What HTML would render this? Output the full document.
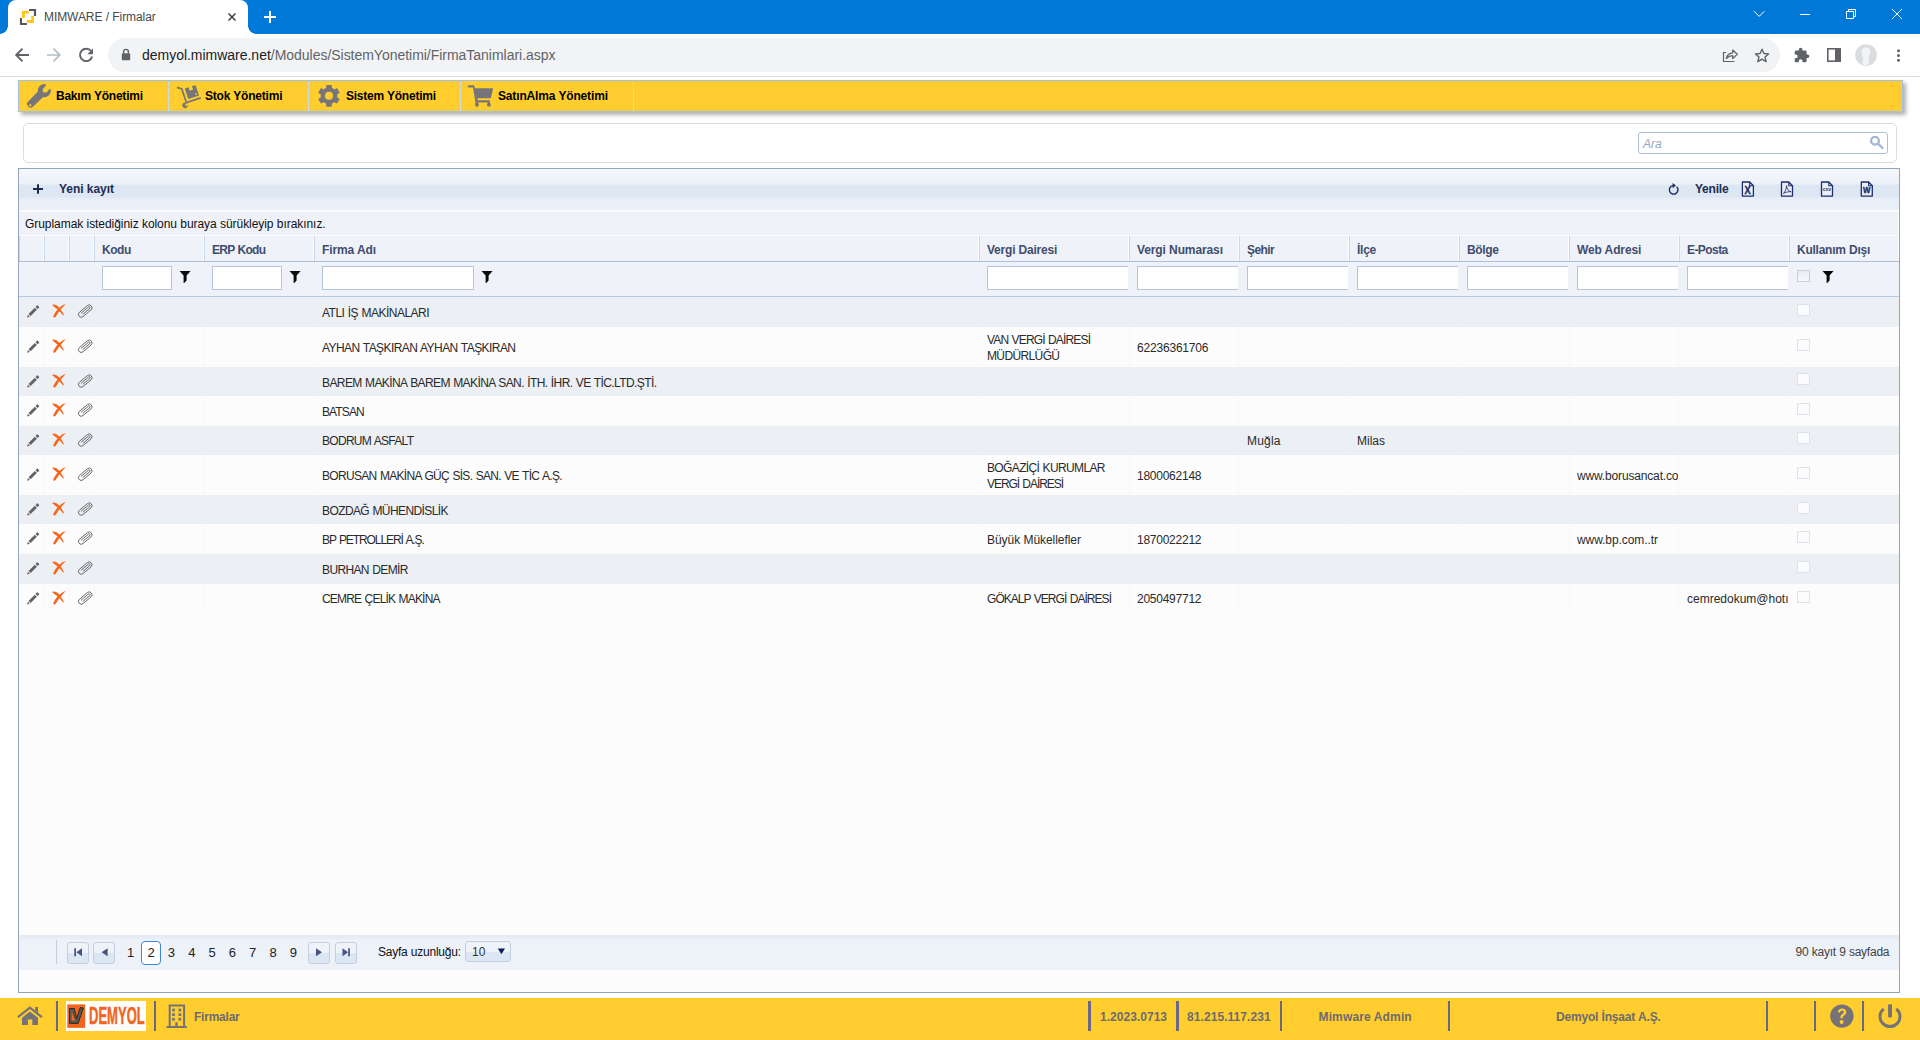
<!DOCTYPE html>
<html lang="tr">
<head>
<meta charset="utf-8">
<title>MIMWARE / Firmalar</title>
<style>
*{box-sizing:border-box;margin:0;padding:0}
html,body{width:1920px;height:1040px;overflow:hidden;background:#fff}
body{font-family:"Liberation Sans",sans-serif;font-size:12px;color:#222;position:relative}
.abs{position:absolute}
svg{display:block;position:absolute;overflow:visible}
/* ---------- browser chrome ---------- */
#tabbar{left:0;top:0;width:1920px;height:34px;background:#0078d7}
#tab{left:8px;top:0;width:240px;height:34px;background:#fff;border-radius:8px 8px 0 0}
#tab:before,#tab:after{content:"";position:absolute;bottom:0;width:8px;height:8px;background:radial-gradient(circle at 0 0,transparent 7.5px,#fff 8px)}
#tab:before{left:-8px}
#tab:after{right:-8px;transform:scaleX(-1)}
#tabtitle{left:44px;top:10px;font-size:12px;color:#45494d;white-space:nowrap;letter-spacing:-0.1px}
#toolbar{left:0;top:34px;width:1920px;height:42px;background:#fff}
#tbline{left:0;top:76px;width:1920px;height:1px;background:#dadce0}
#omni{left:108px;top:38px;width:1672px;height:34px;border-radius:17px;background:#f1f3f4}
#url{left:142px;top:47px;font-size:14px;color:#202124;white-space:nowrap}
#url .pth{color:#5f6368}#url b{font-weight:normal}
/* ---------- menu ---------- */
#menu{left:18px;top:80px;width:1885px;height:32px;background:#ffce2e;border:1px solid #a6bfe6;box-shadow:3px 3px 4px rgba(0,0,0,.3)}
.msep{top:81px;width:1px;height:30px;background:repeating-linear-gradient(#b4c5dc 0,#b4c5dc 1px,#ececec 1px,#ececec 2px)}
.mtxt{top:89px;font-weight:bold;font-size:12px;color:#000;white-space:nowrap}
/* ---------- search panel ---------- */
#spanel{left:23px;top:123px;width:1874px;height:40px;border:1px solid #dcdcdc;border-radius:5px;background:#fff}
#sbox{left:1638px;top:132px;width:250px;height:22px;border:1px solid #adbfdb;border-radius:3px;background:#fff}
#sbox i{position:absolute;left:4px;top:4px;font-size:12px;color:#95a6c1;font-style:italic}
/* ---------- grid ---------- */
#grid{left:18px;top:168px;width:1882px;height:825px;border:1px solid #95a4bd;background:#fcfcfd}
/*GRIDCSS*/
#gtool{left:19px;top:169px;width:1880px;height:41px;background:linear-gradient(#f4f7fb 0,#edf2f9 15px,#dde7f3 16px,#dde7f3 28px,#e7eef7 29px,#ebf0f8 41px)}
.gtb{font-weight:bold;font-size:12px;color:#1e2d52;white-space:nowrap}
#gpanel{left:19px;top:212px;width:1879px;height:23px;background:#eef2f8;color:#111;font-size:12px;line-height:24px;padding-left:6px;white-space:nowrap}
#ghead{left:19px;top:236px;width:1880px;height:26px;background:#eff3f9;border-bottom:1px solid #aec0d9}
.hc{top:236px;height:25px;border-left:1px solid #c9d6e8;border-right:1px solid #fbfcfe;font-weight:bold;font-size:12px;color:#414d6e;line-height:29px;padding-left:7px;white-space:nowrap;overflow:hidden}
#gfilt{left:19px;top:262px;width:1880px;height:35px;background:#eff3f9;border-bottom:1px solid #b7c7de}
.fi{top:266px;height:24px;background:#fff;border:1px solid #b4c4da}
.cb{position:absolute;width:13px;height:12px;border:1px solid #dde3ee;background:#fcfcfe;display:block}
.row{left:19px;width:1880px;overflow:hidden}
.ra{background:#eceff3}
.rb{background:#fcfcfc}
.rb i{position:absolute;top:0;bottom:0;width:2px;background:#fafafa}
.row .c{position:absolute;top:0;white-space:nowrap;overflow:hidden;font-size:12px;color:#2a2a2a}
.row .c.two{top:4.5px}
#pager{left:19px;top:935px;width:1880px;height:35px;background:linear-gradient(#e3eaf5 0,#e9eef7 4px,#edf1f8 5px)}
.pb{top:942px;width:22px;height:22px;border:1px solid #c2cfe2;border-radius:3px;background:linear-gradient(#eef3fa 0,#eef3fa 50%,#dce6f3 50%,#dde7f3 100%)}
.pn{top:944.5px;width:20px;text-align:center;font-size:13px;color:#222}
#pcur{left:141px;top:941px;width:20px;height:24px;border:1px solid #3d86d8;border-radius:4px;background:#fff;text-align:center;font-size:13px;line-height:22px;color:#222}
#plen{left:378px;top:945px;font-size:12px;color:#111;white-space:nowrap}
#psel{left:465px;top:941px;width:46px;height:21px;border:1px solid #c2cfe2;border-radius:3px;background:linear-gradient(#eef3fa 0,#eef3fa 50%,#dce6f3 50%,#dde7f3 100%);font-size:12px;line-height:20px;padding-left:6px;color:#333}
#pinfo{left:1795.5px;top:945px;font-size:12px;color:#444;white-space:nowrap}
#foot{left:0;top:998px;width:1920px;height:42px;background:#ffce2e}
.fs{top:1001px;height:30px;background:#6a6985}
.ft{top:1009.5px;font-weight:bold;font-size:12px;color:#6e6a72;white-space:nowrap}
#logo{left:66px;top:1001px;width:80px;height:30px;background:#fff}
#logo span{position:absolute;left:22.5px;top:1px;font-weight:bold;font-size:24.5px;line-height:28px;color:#f0661f;transform-origin:0 0;transform:scaleX(.532);letter-spacing:0;-webkit-text-stroke:.5px #f0661f}
/*ENDGRIDCSS*/
</style>
</head>
<body>
<!-- BROWSER CHROME -->
<div id="tabbar" class="abs"></div>
<div id="tab" class="abs"></div>
<div id="tabtitle" class="abs"><span style="letter-spacing:-0.073px;word-spacing:0.073px">MIMWARE / Firmalar</span></div>
<div id="toolbar" class="abs"></div>
<div id="tbline" class="abs"></div>
<div id="omni" class="abs"></div>
<div id="url" class="abs"><b><span style="letter-spacing:-0.021px;word-spacing:0.021px">demyol.mimware.net</span></b><span class="pth"><span style="letter-spacing:-0.026px;word-spacing:0.026px">/Modules/SistemYonetimi/FirmaTanimlari.aspx</span></span></div>
<svg class="abs" style="left:0;top:0" width="1920" height="80" viewBox="0 0 1920 80">
<!-- favicon -->
<g fill="#58585c"><path d="M29 8.900h7.100v7h-2.200V11h-4.900z"/><path d="M19.900 18.100h2.100v4.900h4.900v2.100h-7z"/></g>
<g fill="#ffc916"><path d="M21.9 10.9H29v2.7h-4.1V18h-3z"/><path d="M31.2 15.9H34V23h-7.1v-3h4.3z"/></g>
<!-- tab close -->
<path d="M228.5 13.5l7 7M235.500 13.5l-7 7" stroke="#3c4043" stroke-width="1.5" fill="none"/>
<!-- new tab plus -->
<path d="M264 17h12M270 11v12" stroke="#fff" stroke-width="2" fill="none"/>
<!-- window controls -->
<path d="M1754 11.200l5.200 5.200 5.200-5.200" stroke="#fff" stroke-width="1" fill="none"/>
<path d="M1800 14.500h10" stroke="#fff" stroke-width="1" fill="none"/>
<path d="M1846.500 11.500h7v7h-7zM1848.500 11.500v-2h7v7h-2" stroke="#fff" stroke-width="1" fill="none"/>
<path d="M1892 9l10 10M1902 9l-10 10" stroke="#fff" stroke-width="1" fill="none"/>
<!-- back -->
<path d="M29 55H16.500M22.500 48.700L16.200 55l6.300 6.300" stroke="#5f6368" stroke-width="1.900" fill="none"/>
<!-- forward (disabled) -->
<path d="M47 55h12.500M53.500 48.700l6.300 6.300-6.300 6.300" stroke="#b4bcc8" stroke-width="1.700" fill="none"/>
<!-- reload -->
<path d="M91.200 51.200A6.200 6.200 0 1 0 92.200 56.500" stroke="#5f6368" stroke-width="1.900" fill="none"/>
<path d="M93 48.500v5.700h-5.700z" fill="#5f6368"/>
<!-- lock -->
<rect x="121.800" y="53.300" width="8.400" height="7" rx="0.800" fill="#5f6368"/>
<path d="M123.600 53.500v-1.700a2.400 2.400 0 0 1 4.800 0v1.700" stroke="#5f6368" stroke-width="1.400" fill="none"/>
<!-- share -->
<path d="M1726 52.500h-2.500v9h11" stroke="#5f6368" stroke-width="1.200" fill="none"/>
<path d="M1726.300 58.500c0.800-3.500 3-5.300 6.400-5.600v-2.900l4.600 4.300-4.600 4.300v-2.900c-2.700 0-4.700 0.900-6.400 2.800z" stroke="#5f6368" stroke-width="1.200" fill="none" stroke-linejoin="round"/>
<!-- star -->
<path d="M1762 49.200l1.900 4.300 4.700 0.450-3.550 3.100 1.050 4.600-4.100-2.450-4.100 2.450 1.050-4.600-3.550-3.100 4.700-0.450z" stroke="#5f6368" stroke-width="1.400" fill="none" stroke-linejoin="round"/>
<!-- puzzle -->
<path d="M1807.600 54.600h-1v-2.800c0-0.800-0.600-1.400-1.400-1.400h-2.800v-1a1.750 1.750 0 0 0-3.500 0v1h-2.800c-0.800 0-1.400 0.600-1.400 1.400v2.650h1.050a1.900 1.900 0 0 1 0 3.800h-1.050v2.650c0 0.800 0.600 1.400 1.400 1.400h2.650v-1.050a1.900 1.900 0 0 1 3.800 0v1.050h2.650c0.800 0 1.400-0.600 1.400-1.400v-2.800h1a1.750 1.750 0 0 0 0-3.500z" fill="#5f6368"/>
<!-- side panel -->
<rect x="1827.800" y="48.800" width="12.400" height="12.400" stroke="#5f6368" stroke-width="1.600" fill="none"/>
<rect x="1835" y="48.800" width="5.200" height="12.400" fill="#5f6368"/>
<!-- avatar -->
<circle cx="1866" cy="55" r="10.800" fill="#dadce0"/>
<path d="M1866 47.500c2.600 0 4.300 2 4.300 4.700 0 2-0.800 3.600-1.900 4.600l0.600 4.500c0.500 1.500-1 3.600-3 3.900-2 0.300-3.500-1-3.500-2.500l0.800-5.600c-1-1-1.700-2.800-1.700-4.900 0-2.700 1.800-4.700 4.400-4.700z" fill="#f3f4f6"/>
<!-- dots -->
<circle cx="1898.500" cy="50.700" r="1.500" fill="#5f6368"/><circle cx="1898.500" cy="55.500" r="1.500" fill="#5f6368"/><circle cx="1898.500" cy="60.300" r="1.500" fill="#5f6368"/>
</svg>
<!-- MENU -->
<div id="menu" class="abs"></div>
<div class="abs msep" style="left:168px"></div>
<div class="abs msep" style="left:308px"></div>
<div class="abs msep" style="left:460px"></div>
<div class="abs msep" style="left:633px"></div>
<div class="abs mtxt" style="left:56px"><span style="letter-spacing:-0.234px;word-spacing:0.234px">Bakım Yönetimi</span></div>
<div class="abs mtxt" style="left:205px"><span style="letter-spacing:-0.209px;word-spacing:0.209px">Stok Yönetimi</span></div>
<div class="abs mtxt" style="left:346px"><span style="letter-spacing:-0.242px;word-spacing:0.242px">Sistem Yönetimi</span></div>
<div class="abs mtxt" style="left:498px"><span style="letter-spacing:-0.155px;word-spacing:0.155px">SatınAlma Yönetimi</span></div>
<svg class="abs" style="left:0;top:78px" width="700" height="36" viewBox="0 78 700 36">
<g fill="#77757a">
<!-- wrench -->
<path fill-rule="evenodd" d="M44.400 84a6.600 6.600 0 0 0-6.550 7.500L28 101.800a3 3 0 0 0 0 4.300l0.600 0.600a3 3 0 0 0 4.300 0L43.200 97.100a6.600 6.600 0 0 0 7.600-7.500l-1.200-0.800-3 3.600-3.800-0.100 0-3.300 3.300-3.400-0.400-1.100a6.600 6.600 0 0 0-1.300-0.500zM30.300 104.100a1.100 1.100 0 1 0 0.010 0z"/>
<!-- dolly -->
<path d="M176.700 88.200l0.500-1.700 5.300 1.700 4.400 13.200 13.600-4.300 0.550 1.700-13.900 4.400a2.900 2.900 0 1 1-1.700-0.800L181.100 89.600z"/>
<path fill="#ffce2e" d="M186.600 103.400a1.300 1.300 0 1 0 0.010 0z"/>
<path fill-rule="evenodd" d="M184.800 88.600l3.800-1.250 1.150 3.500 3.300-1.100-1.150-3.500 3.600-1.200 3.500 10.500-10.700 3.500zM195 93.400l1.500-0.500 0.500 1.500-1.500 0.500z"/>
<!-- gear -->
<path fill-rule="evenodd" d="M326.06 88.09L326.33 84.97L331.67 84.97L331.94 88.09A8.30 8.30 0 0 1 334.26 89.43L337.08 88.10L339.76 92.73L337.19 94.51A8.30 8.30 0 0 1 337.19 97.19L339.76 98.97L337.08 103.60L334.26 102.27A8.30 8.30 0 0 1 331.94 103.61L331.67 106.73L326.33 106.73L326.06 103.61A8.30 8.30 0 0 1 323.74 102.27L320.92 103.60L318.24 98.97L320.81 97.19A8.30 8.30 0 0 1 320.81 94.51L318.24 92.73L320.92 88.10L323.74 89.43A8.30 8.30 0 0 1 326.06 88.09ZM325.00 95.85a4 4 0 1 0 8 0a4 4 0 1 0 -8 0Z"/>
<!-- cart -->
<path d="M468.800 85.300h4.600a1 1 0 0 1 1 0.800l0.400 2.100h17.400a0.800 0.800 0 0 1 0.800 1l-2 8.300a1 1 0 0 1-1 0.800h-12.600l0.300 2h12.100v4.400h-2.100v-2.200h-9.700v2.200h-2.200L473 87.600h-4.200a1.100 1.100 0 0 1 0-2.300z"/>
<circle cx="476.900" cy="104.700" r="1.950"/><circle cx="488.900" cy="104.700" r="1.950"/>
</g>
</svg>
<!-- SEARCH PANEL -->
<div id="spanel" class="abs"></div>
<div id="sbox" class="abs"><i>Ara</i></div>
<!-- GRID -->
<div id="grid" class="abs"></div>
<!--GRIDCONTENT-->
<div class="abs" id="gtool"></div>
<div class="abs gtb" style="left:59px;top:182px"><span style="letter-spacing:-0.047px;word-spacing:0.047px">Yeni kayıt</span></div>
<div class="abs gtb" style="left:1695px;top:182px"><span style="letter-spacing:-0.217px;word-spacing:0.217px">Yenile</span></div>
<div class="abs" id="gpanel"><span style="letter-spacing:-0.055px;word-spacing:0.055px">Gruplamak istediğiniz kolonu buraya sürükleyip bırakınız.</span></div>
<div class="abs" id="ghead"></div>
<div class="abs hc" style="left:19px;width:25px"></div>
<div class="abs hc" style="left:44px;width:25px"></div>
<div class="abs hc" style="left:69px;width:25px"></div>
<div class="abs hc" style="left:94px;width:110px"><span style="letter-spacing:-0.452px;word-spacing:0.452px">Kodu</span></div>
<div class="abs hc" style="left:204px;width:110px"><span style="letter-spacing:-0.742px;word-spacing:0.742px">ERP Kodu</span></div>
<div class="abs hc" style="left:314px;width:665px"><span style="letter-spacing:-0.129px;word-spacing:0.129px">Firma Adı</span></div>
<div class="abs hc" style="left:979px;width:150px"><span style="letter-spacing:-0.22px;word-spacing:0.22px">Vergi Dairesi</span></div>
<div class="abs hc" style="left:1129px;width:110px"><span style="letter-spacing:-0.115px;word-spacing:0.115px">Vergi Numarası</span></div>
<div class="abs hc" style="left:1239px;width:110px"><span style="letter-spacing:-0.579px;word-spacing:0.579px">Şehir</span></div>
<div class="abs hc" style="left:1349px;width:110px"><span style="letter-spacing:-0.239px;word-spacing:0.239px">İlçe</span></div>
<div class="abs hc" style="left:1459px;width:110px"><span style="letter-spacing:-0.336px;word-spacing:0.336px">Bölge</span></div>
<div class="abs hc" style="left:1569px;width:110px"><span style="letter-spacing:-0.132px;word-spacing:0.132px">Web Adresi</span></div>
<div class="abs hc" style="left:1679px;width:110px"><span style="letter-spacing:-0.565px;word-spacing:0.565px">E-Posta</span></div>
<div class="abs hc" style="left:1789px;width:110px"><span style="letter-spacing:-0.247px;word-spacing:0.247px">Kullanım Dışı</span></div>
<div class="abs" id="gfilt"></div>
<div class="abs fi" style="left:102px;width:70px"></div>
<div class="abs fi" style="left:212px;width:70px"></div>
<div class="abs fi" style="left:322px;width:152px"></div>
<div class="abs fi" style="left:987px;width:141px;border-right:0"></div>
<div class="abs fi" style="left:1137px;width:101px;border-right:0"></div>
<div class="abs fi" style="left:1247px;width:101px;border-right:0"></div>
<div class="abs fi" style="left:1357px;width:101px;border-right:0"></div>
<div class="abs fi" style="left:1467px;width:101px;border-right:0"></div>
<div class="abs fi" style="left:1577px;width:101px;border-right:0"></div>
<div class="abs fi" style="left:1687px;width:101px;border-right:0"></div>
<div class="abs cb" style="left:1797px;top:270px;width:13px;border-color:#c9ced9;background:linear-gradient(#e9ebf0,#f7f8fa)"></div>
<div class="abs row ra" style="top:297px;height:30px">
<span class="c" style="left:303px;width:656px;height:30px;line-height:33.2px"><span style="letter-spacing:-0.504px;word-spacing:0.504px">ATLI İŞ MAKİNALARI</span></span>
<b class="cb" style="left:1778px;top:7px"></b>
</div>
<div class="abs row rb" style="top:327px;height:40px">
<i style="left:24px"></i>
<i style="left:49px"></i>
<i style="left:74px"></i>
<i style="left:184px"></i>
<i style="left:294px"></i>
<i style="left:959px"></i>
<i style="left:1109px"></i>
<i style="left:1219px"></i>
<i style="left:1329px"></i>
<i style="left:1439px"></i>
<i style="left:1549px"></i>
<i style="left:1659px"></i>
<i style="left:1769px"></i>
<span class="c" style="left:303px;width:656px;height:40px;line-height:43.2px"><span style="letter-spacing:-0.562px;word-spacing:0.562px">AYHAN TAŞKIRAN AYHAN TAŞKIRAN</span></span>
<span class="c two" style="left:968px;width:141px;height:40px;line-height:16px"><span style="letter-spacing:-0.844px;word-spacing:0.844px">VAN VERGİ DAİRESİ</span><br><span style="letter-spacing:-0.625px;word-spacing:0.625px">MÜDÜRLÜĞÜ</span></span>
<span class="c" style="left:1118px;width:101px;height:40px;line-height:43.2px"><span style="letter-spacing:-0.192px;word-spacing:0.192px">62236361706</span></span>
<b class="cb" style="left:1778px;top:12px"></b>
</div>
<div class="abs row ra" style="top:367px;height:29px">
<span class="c" style="left:303px;width:656px;height:29px;line-height:33.2px"><span style="letter-spacing:-0.595px;word-spacing:0.595px">BAREM MAKİNA BAREM MAKİNA SAN. İTH. İHR. VE TİC.LTD.ŞTİ.</span></span>
<b class="cb" style="left:1778px;top:6px"></b>
</div>
<div class="abs row rb" style="top:396px;height:30px">
<i style="left:24px"></i>
<i style="left:49px"></i>
<i style="left:74px"></i>
<i style="left:184px"></i>
<i style="left:294px"></i>
<i style="left:959px"></i>
<i style="left:1109px"></i>
<i style="left:1219px"></i>
<i style="left:1329px"></i>
<i style="left:1439px"></i>
<i style="left:1549px"></i>
<i style="left:1659px"></i>
<i style="left:1769px"></i>
<span class="c" style="left:303px;width:656px;height:30px;line-height:32.8px"><span style="letter-spacing:-0.885px;word-spacing:0.885px">BATSAN</span></span>
<b class="cb" style="left:1778px;top:7px"></b>
</div>
<div class="abs row ra" style="top:426px;height:29px">
<span class="c" style="left:303px;width:656px;height:29px;line-height:30.4px"><span style="letter-spacing:-0.709px;word-spacing:0.709px">BODRUM ASFALT</span></span>
<span class="c" style="left:1228px;width:101px;height:29px;line-height:30.4px"><span style="letter-spacing:0.203px;word-spacing:-0.203px">Muğla</span></span>
<span class="c" style="left:1338px;width:101px;height:29px;line-height:30.4px"><span style="letter-spacing:-0.004px;word-spacing:0.004px">Milas</span></span>
<b class="cb" style="left:1778px;top:6px"></b>
</div>
<div class="abs row rb" style="top:455px;height:40px">
<i style="left:24px"></i>
<i style="left:49px"></i>
<i style="left:74px"></i>
<i style="left:184px"></i>
<i style="left:294px"></i>
<i style="left:959px"></i>
<i style="left:1109px"></i>
<i style="left:1219px"></i>
<i style="left:1329px"></i>
<i style="left:1439px"></i>
<i style="left:1549px"></i>
<i style="left:1659px"></i>
<i style="left:1769px"></i>
<span class="c" style="left:303px;width:656px;height:40px;line-height:43.2px"><span style="letter-spacing:-0.685px;word-spacing:0.685px">BORUSAN MAKİNA GÜÇ SİS. SAN. VE TİC A.Ş.</span></span>
<span class="c two" style="left:968px;width:141px;height:40px;line-height:16px"><span style="letter-spacing:-0.634px;word-spacing:0.634px">BOĞAZİÇİ KURUMLAR</span><br><span style="letter-spacing:-1.062px;word-spacing:1.062px">VERGİ DAİRESİ</span></span>
<span class="c" style="left:1118px;width:101px;height:40px;line-height:43.2px"><span style="letter-spacing:-0.25px;word-spacing:0.25px">1800062148</span></span>
<span class="c" style="left:1558px;width:101px;height:40px;line-height:43.2px"><span style="letter-spacing:-0.16px;word-spacing:0.16px">www.borusancat.co</span></span>
<b class="cb" style="left:1778px;top:12px"></b>
</div>
<div class="abs row ra" style="top:495px;height:29px">
<span class="c" style="left:303px;width:656px;height:29px;line-height:32.4px"><span style="letter-spacing:-0.596px;word-spacing:0.596px">BOZDAĞ MÜHENDİSLİK</span></span>
<b class="cb" style="left:1778px;top:7px"></b>
</div>
<div class="abs row rb" style="top:524px;height:30px">
<i style="left:24px"></i>
<i style="left:49px"></i>
<i style="left:74px"></i>
<i style="left:184px"></i>
<i style="left:294px"></i>
<i style="left:959px"></i>
<i style="left:1109px"></i>
<i style="left:1219px"></i>
<i style="left:1329px"></i>
<i style="left:1439px"></i>
<i style="left:1549px"></i>
<i style="left:1659px"></i>
<i style="left:1769px"></i>
<span class="c" style="left:303px;width:656px;height:30px;line-height:33.4px"><span style="letter-spacing:-1.091px;word-spacing:1.091px">BP PETROLLERİ A.Ş.</span></span>
<span class="c" style="left:968px;width:141px;height:30px;line-height:33.4px"><span style="letter-spacing:-0.048px;word-spacing:0.048px">Büyük Mükellefler</span></span>
<span class="c" style="left:1118px;width:101px;height:30px;line-height:33.4px"><span style="letter-spacing:-0.25px;word-spacing:0.25px">1870022212</span></span>
<span class="c" style="left:1558px;width:101px;height:30px;line-height:33.4px"><span style="letter-spacing:-0.079px;word-spacing:0.079px">www.bp.com..tr</span></span>
<b class="cb" style="left:1778px;top:7px"></b>
</div>
<div class="abs row ra" style="top:554px;height:30px">
<span class="c" style="left:303px;width:656px;height:30px;line-height:32.6px"><span style="letter-spacing:-0.627px;word-spacing:0.627px">BURHAN DEMİR</span></span>
<b class="cb" style="left:1778px;top:7px"></b>
</div>
<div class="abs row rb" style="top:584px;height:29px">
<i style="left:24px"></i>
<i style="left:49px"></i>
<i style="left:74px"></i>
<i style="left:184px"></i>
<i style="left:294px"></i>
<i style="left:959px"></i>
<i style="left:1109px"></i>
<i style="left:1219px"></i>
<i style="left:1329px"></i>
<i style="left:1439px"></i>
<i style="left:1549px"></i>
<i style="left:1659px"></i>
<i style="left:1769px"></i>
<span class="c" style="left:303px;width:656px;height:29px;line-height:31.6px"><span style="letter-spacing:-0.814px;word-spacing:0.814px">CEMRE ÇELİK MAKİNA</span></span>
<span class="c" style="left:968px;width:141px;height:29px;line-height:31.6px"><span style="letter-spacing:-0.951px;word-spacing:0.951px">GÖKALP VERGİ DAİRESİ</span></span>
<span class="c" style="left:1118px;width:101px;height:29px;line-height:31.6px"><span style="letter-spacing:-0.25px;word-spacing:0.25px">2050497712</span></span>
<span class="c" style="left:1668px;width:101px;height:29px;line-height:31.6px"><span style="letter-spacing:-0.004px;word-spacing:0.004px">cemredokum@hotı</span></span>
<b class="cb" style="left:1778px;top:7px"></b>
</div>
<div class="abs" id="pager"></div>
<div class="abs" style="left:56px;top:940px;width:1px;height:24px;background:#c3cedf"></div>
<div class="abs pb" style="left:67px"></div>
<div class="abs pb" style="left:93px"></div>
<div class="abs pb" style="left:308px"></div>
<div class="abs pb" style="left:335px"></div>
<div class="abs" id="pcur">2</div>
<div class="abs pn" style="left:120.5px">1</div>
<div class="abs pn" style="left:161.3px">3</div>
<div class="abs pn" style="left:181.8px">4</div>
<div class="abs pn" style="left:202.1px">5</div>
<div class="abs pn" style="left:222.4px">6</div>
<div class="abs pn" style="left:242.7px">7</div>
<div class="abs pn" style="left:263.0px">8</div>
<div class="abs pn" style="left:283.4px">9</div>
<div class="abs" id="plen"><span style="letter-spacing:-0.236px;word-spacing:0.236px">Sayfa uzunluğu:</span></div>
<div class="abs" id="psel">10</div>
<div class="abs" id="pinfo"><span style="letter-spacing:-0.243px;word-spacing:0.243px">90 kayıt 9 sayfada</span></div>
<div class="abs" id="foot"></div>
<div class="abs fs" style="left:56px;width:2px"></div>
<div class="abs fs" style="left:154px;width:2px"></div>
<div class="abs fs" style="left:1088px;width:3px"></div>
<div class="abs fs" style="left:1176px;width:3px"></div>
<div class="abs fs" style="left:1280px;width:2px"></div>
<div class="abs fs" style="left:1448px;width:2px"></div>
<div class="abs fs" style="left:1766px;width:2px"></div>
<div class="abs fs" style="left:1814px;width:2px"></div>
<div class="abs fs" style="left:1862px;width:2px"></div>
<div class="abs" id="logo"><span>DEMYOL</span></div>
<div class="abs ft" style="left:194px"><span style="letter-spacing:-0.223px;word-spacing:0.223px">Firmalar</span></div>
<div class="abs ft" style="left:1100px"><span style="letter-spacing:0.027px;word-spacing:-0.027px">1.2023.0713</span></div>
<div class="abs ft" style="left:1187px"><span style="letter-spacing:0.072px;word-spacing:-0.072px">81.215.117.231</span></div>
<div class="abs ft" style="left:1318.500px"><span style="letter-spacing:0.147px;word-spacing:-0.147px">Mimware Admin</span></div>
<div class="abs ft" style="left:1556px"><span style="letter-spacing:-0.186px;word-spacing:0.186px">Demyol İnşaat A.Ş.</span></div>
<!--GRIDICONS-->
<svg class="abs" style="left:0;top:0;pointer-events:none" width="1920" height="1040" viewBox="0 0 1920 1040">
<g transform="translate(0 304.5)"><path d="M28.500 9.500l6.300-6.300 2.100 2.100-6.300 6.300z" fill="#646266"/><path d="M35.500 2.500l1.400-1.400a0.600 0.600 0 0 1 0.900 0l1.200 1.200a0.600 0.600 0 0 1 0 0.900l-1.400 1.400z" fill="#646266"/><path d="M27.900 10.200l2 2-2.800 0.800z" fill="#646266"/><path d="M52 0.400C53.500 -0.600 56.200 -0.200 58.200 2C60.400 4.400 62.400 7.200 63.900 10.400L63.100 10.900C61.200 8.300 59 6.100 56.500 4.100C54.700 2.600 53.400 1.600 52 0.400Z" fill="#f4661b"/><path d="M65.800 -0.500C62.800 0.300 60 2.300 57.500 5.100C55.200 7.800 53.600 10.400 53.200 12.300C53.300 13.200 54.900 13.300 55.900 12C57.200 9.800 58.800 7.500 60.600 5.300C62.200 3.300 63.900 1.300 65.800 -0.500Z" fill="#f4661b"/><g transform="rotate(-40 85.300 6.500)" fill="none" stroke="#66666a" stroke-width="0.900"><rect x="77.200" y="3.700" width="16" height="5.600" rx="2.800"/><path d="M80.500 5.500h9.800a1 1 0 0 1 0 2h-9"/></g></g>
<g transform="translate(0 339.7)"><path d="M28.500 9.500l6.300-6.300 2.100 2.100-6.300 6.300z" fill="#646266"/><path d="M35.500 2.500l1.400-1.400a0.600 0.600 0 0 1 0.900 0l1.200 1.200a0.600 0.600 0 0 1 0 0.900l-1.400 1.400z" fill="#646266"/><path d="M27.900 10.200l2 2-2.800 0.800z" fill="#646266"/><path d="M52 0.400C53.500 -0.600 56.200 -0.200 58.200 2C60.400 4.400 62.400 7.200 63.900 10.400L63.100 10.900C61.200 8.300 59 6.100 56.500 4.100C54.700 2.600 53.400 1.600 52 0.400Z" fill="#f4661b"/><path d="M65.800 -0.500C62.800 0.300 60 2.300 57.500 5.100C55.200 7.800 53.600 10.400 53.200 12.300C53.300 13.200 54.900 13.300 55.900 12C57.200 9.800 58.800 7.500 60.600 5.300C62.200 3.300 63.900 1.300 65.800 -0.500Z" fill="#f4661b"/><g transform="rotate(-40 85.300 6.500)" fill="none" stroke="#66666a" stroke-width="0.900"><rect x="77.200" y="3.700" width="16" height="5.600" rx="2.800"/><path d="M80.500 5.500h9.800a1 1 0 0 1 0 2h-9"/></g></g>
<g transform="translate(0 374.5)"><path d="M28.500 9.500l6.300-6.300 2.100 2.100-6.300 6.300z" fill="#646266"/><path d="M35.500 2.500l1.400-1.400a0.600 0.600 0 0 1 0.900 0l1.200 1.200a0.600 0.600 0 0 1 0 0.900l-1.400 1.400z" fill="#646266"/><path d="M27.900 10.200l2 2-2.800 0.800z" fill="#646266"/><path d="M52 0.400C53.500 -0.600 56.200 -0.200 58.200 2C60.400 4.400 62.400 7.200 63.900 10.400L63.100 10.900C61.200 8.300 59 6.100 56.500 4.100C54.700 2.600 53.400 1.600 52 0.400Z" fill="#f4661b"/><path d="M65.800 -0.500C62.800 0.300 60 2.300 57.500 5.100C55.200 7.800 53.600 10.400 53.200 12.300C53.300 13.200 54.900 13.300 55.900 12C57.200 9.800 58.800 7.500 60.600 5.300C62.200 3.300 63.900 1.300 65.800 -0.500Z" fill="#f4661b"/><g transform="rotate(-40 85.300 6.500)" fill="none" stroke="#66666a" stroke-width="0.900"><rect x="77.200" y="3.700" width="16" height="5.600" rx="2.800"/><path d="M80.500 5.500h9.800a1 1 0 0 1 0 2h-9"/></g></g>
<g transform="translate(0 403.5)"><path d="M28.500 9.500l6.300-6.300 2.100 2.100-6.300 6.300z" fill="#646266"/><path d="M35.500 2.500l1.400-1.400a0.600 0.600 0 0 1 0.900 0l1.200 1.200a0.600 0.600 0 0 1 0 0.900l-1.400 1.400z" fill="#646266"/><path d="M27.900 10.200l2 2-2.800 0.800z" fill="#646266"/><path d="M52 0.400C53.500 -0.600 56.200 -0.200 58.200 2C60.400 4.400 62.400 7.200 63.900 10.400L63.100 10.900C61.200 8.300 59 6.100 56.500 4.100C54.700 2.600 53.400 1.600 52 0.400Z" fill="#f4661b"/><path d="M65.800 -0.500C62.800 0.300 60 2.300 57.500 5.100C55.200 7.800 53.600 10.400 53.200 12.300C53.300 13.200 54.900 13.300 55.900 12C57.200 9.800 58.800 7.500 60.600 5.300C62.200 3.300 63.900 1.300 65.800 -0.500Z" fill="#f4661b"/><g transform="rotate(-40 85.300 6.500)" fill="none" stroke="#66666a" stroke-width="0.900"><rect x="77.200" y="3.700" width="16" height="5.600" rx="2.800"/><path d="M80.500 5.500h9.800a1 1 0 0 1 0 2h-9"/></g></g>
<g transform="translate(0 433.5)"><path d="M28.500 9.500l6.300-6.300 2.100 2.100-6.300 6.300z" fill="#646266"/><path d="M35.500 2.500l1.400-1.400a0.600 0.600 0 0 1 0.900 0l1.200 1.200a0.600 0.600 0 0 1 0 0.900l-1.400 1.400z" fill="#646266"/><path d="M27.900 10.200l2 2-2.800 0.800z" fill="#646266"/><path d="M52 0.400C53.500 -0.600 56.200 -0.200 58.200 2C60.400 4.400 62.400 7.200 63.900 10.400L63.100 10.900C61.200 8.300 59 6.100 56.500 4.100C54.700 2.600 53.400 1.600 52 0.400Z" fill="#f4661b"/><path d="M65.800 -0.500C62.800 0.300 60 2.300 57.500 5.100C55.200 7.800 53.600 10.400 53.200 12.300C53.300 13.200 54.900 13.300 55.900 12C57.200 9.800 58.800 7.500 60.600 5.300C62.200 3.300 63.900 1.300 65.800 -0.500Z" fill="#f4661b"/><g transform="rotate(-40 85.300 6.500)" fill="none" stroke="#66666a" stroke-width="0.900"><rect x="77.200" y="3.700" width="16" height="5.600" rx="2.800"/><path d="M80.500 5.500h9.800a1 1 0 0 1 0 2h-9"/></g></g>
<g transform="translate(0 467.7)"><path d="M28.500 9.500l6.300-6.300 2.100 2.100-6.300 6.300z" fill="#646266"/><path d="M35.500 2.500l1.400-1.400a0.600 0.600 0 0 1 0.900 0l1.200 1.200a0.600 0.600 0 0 1 0 0.900l-1.400 1.400z" fill="#646266"/><path d="M27.900 10.200l2 2-2.800 0.800z" fill="#646266"/><path d="M52 0.400C53.500 -0.600 56.200 -0.200 58.200 2C60.400 4.400 62.400 7.200 63.900 10.400L63.100 10.900C61.200 8.300 59 6.100 56.500 4.100C54.700 2.600 53.400 1.600 52 0.400Z" fill="#f4661b"/><path d="M65.800 -0.500C62.800 0.300 60 2.300 57.500 5.100C55.200 7.800 53.600 10.400 53.200 12.300C53.300 13.200 54.900 13.300 55.900 12C57.200 9.800 58.800 7.500 60.600 5.300C62.200 3.300 63.900 1.300 65.800 -0.500Z" fill="#f4661b"/><g transform="rotate(-40 85.300 6.500)" fill="none" stroke="#66666a" stroke-width="0.900"><rect x="77.200" y="3.700" width="16" height="5.600" rx="2.800"/><path d="M80.500 5.500h9.800a1 1 0 0 1 0 2h-9"/></g></g>
<g transform="translate(0 502.5)"><path d="M28.500 9.500l6.300-6.300 2.100 2.100-6.300 6.300z" fill="#646266"/><path d="M35.500 2.500l1.400-1.400a0.600 0.600 0 0 1 0.900 0l1.200 1.200a0.600 0.600 0 0 1 0 0.900l-1.400 1.400z" fill="#646266"/><path d="M27.900 10.200l2 2-2.800 0.800z" fill="#646266"/><path d="M52 0.400C53.500 -0.600 56.200 -0.200 58.200 2C60.400 4.400 62.400 7.200 63.900 10.400L63.100 10.900C61.200 8.300 59 6.100 56.500 4.100C54.700 2.600 53.400 1.600 52 0.400Z" fill="#f4661b"/><path d="M65.800 -0.500C62.800 0.300 60 2.300 57.500 5.100C55.200 7.800 53.600 10.400 53.200 12.300C53.300 13.200 54.900 13.300 55.900 12C57.200 9.800 58.800 7.500 60.600 5.300C62.200 3.300 63.900 1.300 65.800 -0.500Z" fill="#f4661b"/><g transform="rotate(-40 85.300 6.500)" fill="none" stroke="#66666a" stroke-width="0.900"><rect x="77.200" y="3.700" width="16" height="5.600" rx="2.800"/><path d="M80.500 5.500h9.800a1 1 0 0 1 0 2h-9"/></g></g>
<g transform="translate(0 531.5)"><path d="M28.500 9.500l6.300-6.300 2.100 2.100-6.300 6.300z" fill="#646266"/><path d="M35.500 2.500l1.400-1.400a0.600 0.600 0 0 1 0.900 0l1.200 1.200a0.600 0.600 0 0 1 0 0.900l-1.400 1.400z" fill="#646266"/><path d="M27.900 10.200l2 2-2.800 0.800z" fill="#646266"/><path d="M52 0.400C53.500 -0.600 56.200 -0.200 58.200 2C60.400 4.400 62.400 7.200 63.900 10.400L63.100 10.900C61.200 8.300 59 6.100 56.500 4.100C54.700 2.600 53.400 1.600 52 0.400Z" fill="#f4661b"/><path d="M65.800 -0.500C62.800 0.300 60 2.300 57.500 5.100C55.200 7.800 53.600 10.400 53.200 12.300C53.300 13.200 54.900 13.300 55.900 12C57.200 9.800 58.800 7.500 60.600 5.300C62.200 3.300 63.900 1.300 65.800 -0.500Z" fill="#f4661b"/><g transform="rotate(-40 85.300 6.500)" fill="none" stroke="#66666a" stroke-width="0.900"><rect x="77.200" y="3.700" width="16" height="5.600" rx="2.800"/><path d="M80.500 5.500h9.800a1 1 0 0 1 0 2h-9"/></g></g>
<g transform="translate(0 561.5)"><path d="M28.500 9.500l6.300-6.300 2.100 2.100-6.300 6.300z" fill="#646266"/><path d="M35.500 2.500l1.400-1.400a0.600 0.600 0 0 1 0.900 0l1.200 1.200a0.600 0.600 0 0 1 0 0.900l-1.400 1.400z" fill="#646266"/><path d="M27.900 10.200l2 2-2.800 0.800z" fill="#646266"/><path d="M52 0.400C53.500 -0.600 56.200 -0.200 58.200 2C60.400 4.400 62.400 7.200 63.900 10.400L63.100 10.900C61.200 8.300 59 6.100 56.500 4.100C54.700 2.600 53.400 1.600 52 0.400Z" fill="#f4661b"/><path d="M65.800 -0.500C62.800 0.300 60 2.300 57.500 5.100C55.200 7.800 53.600 10.400 53.200 12.300C53.300 13.200 54.900 13.300 55.900 12C57.200 9.800 58.800 7.500 60.600 5.300C62.200 3.300 63.900 1.300 65.800 -0.500Z" fill="#f4661b"/><g transform="rotate(-40 85.300 6.500)" fill="none" stroke="#66666a" stroke-width="0.900"><rect x="77.200" y="3.700" width="16" height="5.600" rx="2.800"/><path d="M80.500 5.500h9.800a1 1 0 0 1 0 2h-9"/></g></g>
<g transform="translate(0 591.5)"><path d="M28.500 9.500l6.300-6.300 2.100 2.100-6.300 6.300z" fill="#646266"/><path d="M35.500 2.500l1.400-1.400a0.600 0.600 0 0 1 0.900 0l1.200 1.200a0.600 0.600 0 0 1 0 0.900l-1.400 1.400z" fill="#646266"/><path d="M27.900 10.200l2 2-2.800 0.800z" fill="#646266"/><path d="M52 0.400C53.500 -0.600 56.200 -0.200 58.200 2C60.400 4.400 62.400 7.200 63.900 10.400L63.100 10.900C61.200 8.300 59 6.100 56.500 4.100C54.700 2.600 53.400 1.600 52 0.400Z" fill="#f4661b"/><path d="M65.800 -0.500C62.800 0.300 60 2.300 57.500 5.100C55.200 7.800 53.600 10.400 53.200 12.300C53.300 13.200 54.900 13.300 55.900 12C57.200 9.800 58.800 7.500 60.600 5.300C62.200 3.300 63.900 1.300 65.800 -0.500Z" fill="#f4661b"/><g transform="rotate(-40 85.300 6.500)" fill="none" stroke="#66666a" stroke-width="0.900"><rect x="77.200" y="3.700" width="16" height="5.600" rx="2.800"/><path d="M80.500 5.500h9.800a1 1 0 0 1 0 2h-9"/></g></g>
<path d="M33 189h10M38 184.200v9.600" stroke="#1c2a50" stroke-width="2" fill="none"/>
<path d="M1676.600 186.700a4.300 4.300 0 1 1-3.600-1.100" stroke="#1c2b5e" stroke-width="1.400" fill="none"/><path d="M1672.600 183v5.200l3.300-2.600z" fill="#1c2b5e"/>
<g transform="translate(1741.7 181.300)"><path d="M0.700 0.700h7.300l3.700 3.700v10.400h-11z" fill="#e9eff8" stroke="#1d2c6b" stroke-width="1.300" stroke-linejoin="round"/><path d="M8 0.700v3.700h3.700" fill="none" stroke="#1d2c6b" stroke-width="1.100"/></g>
<g transform="translate(1780.8 181.300)"><path d="M0.700 0.700h7.300l3.700 3.700v10.400h-11z" fill="#e9eff8" stroke="#1d2c6b" stroke-width="1.300" stroke-linejoin="round"/><path d="M8 0.700v3.700h3.700" fill="none" stroke="#1d2c6b" stroke-width="1.100"/></g>
<g transform="translate(1820.8 181.300)"><path d="M0.700 0.700h7.300l3.700 3.700v10.400h-11z" fill="#e9eff8" stroke="#1d2c6b" stroke-width="1.300" stroke-linejoin="round"/><path d="M8 0.700v3.700h3.700" fill="none" stroke="#1d2c6b" stroke-width="1.100"/></g>
<g transform="translate(1860.6 181.300)"><path d="M0.700 0.700h7.300l3.700 3.700v10.400h-11z" fill="#e9eff8" stroke="#1d2c6b" stroke-width="1.300" stroke-linejoin="round"/><path d="M8 0.700v3.700h3.700" fill="none" stroke="#1d2c6b" stroke-width="1.100"/></g>
<text x="1747.700" y="193.600" text-anchor="middle" font-family="Liberation Sans,sans-serif" font-weight="bold" font-size="10" fill="#1d2c6b" stroke="#1d2c6b" stroke-width="0.400" textLength="6.200" lengthAdjust="spacingAndGlyphs">X</text>
<path d="M1783.500 193.500c1.800-2 2.900-4.600 3-7.800 0.600 3.600 2 5.300 4.600 6.100-2.800-0.300-5.300 0.300-7.600 1.700z" fill="none" stroke="#2a3573" stroke-width="0.900"/>
<text x="1826.900" y="191.200" text-anchor="middle" font-family="Liberation Sans,sans-serif" font-weight="bold" font-size="5" fill="#1d2c6b">csv</text>
<text x="1866.700" y="193" text-anchor="middle" font-family="Liberation Sans,sans-serif" font-weight="bold" font-size="8.500" fill="#1d2c6b" stroke="#1d2c6b" stroke-width="0.400" textLength="7.400" lengthAdjust="spacingAndGlyphs">W</text>
<circle cx="1875" cy="140.700" r="3.900" fill="none" stroke="#a3b6d3" stroke-width="2.300"/><path d="M1878.200 143.900l4.300 4.100" stroke="#a3b6d3" stroke-width="2.400" stroke-linecap="round"/>
<path transform="translate(179.5 271)" d="M0 0h11.100l-4 4.600v4.900l-2.400 2.500h-0.600v-7.400z" fill="#0b0b0b"/>
<path transform="translate(289.5 271)" d="M0 0h11.100l-4 4.600v4.900l-2.400 2.500h-0.600v-7.400z" fill="#0b0b0b"/>
<path transform="translate(481.5 271)" d="M0 0h11.100l-4 4.600v4.900l-2.400 2.500h-0.600v-7.400z" fill="#0b0b0b"/>
<path transform="translate(1822.5 271)" d="M0 0h11.100l-4 4.600v4.900l-2.400 2.500h-0.600v-7.400z" fill="#0b0b0b"/>
<path d="M74.300 948.200h1.700v8h-1.700zM82 948.200v8l-5.600-4z" fill="#46557f"/>
<path d="M107.600 948.200v8l-6-4z" fill="#46557f"/>
<path d="M316 948.200v8l6-4z" fill="#46557f"/>
<path d="M342.500 948.200v8l5.600-4zM348.200 948.200h1.700v8h-1.700z" fill="#46557f"/>
<path d="M497.800 948.400h7.200l-3.600 5.800z" fill="#0c1f5c"/>
<g fill="#757378"><path d="M29.900 1006.300l12.700 10-1.400 1.700-11.300-8.900-11.300 8.900-1.400-1.700z"/><path d="M35.200 1007.100h2.800v5.500l-2.800-2.200z"/><path d="M29.900 1011.400l8.100 6.400v7.100h-5.700v-5.300h-4.400v5.300H22v-7.100z"/></g>
<rect x="67.300" y="1004.400" width="17.900" height="23.500" fill="#f0661f"/>
<path d="M69.500 1008.500h4.800l2.300 9.800 3.600-10.800 3.200 0.600-5.300 15.300h-8.600z" fill="#55564c" stroke="#1a1a1a" stroke-width="0.800"/>
<path d="M71.600 1011v9.500h3.500z" fill="#f0661f"/>
<g fill="none" stroke="#757378" stroke-width="2"><path d="M169.700 1026v-20.600h14.400v20.600"/><path d="M166.500 1027h20.400"/></g>
<rect x="172.2" y="1008.7" width="2.700" height="2.700" fill="#757378"/>
<rect x="172.2" y="1013.3" width="2.700" height="2.700" fill="#757378"/>
<rect x="172.2" y="1017.9" width="2.700" height="2.700" fill="#757378"/>
<rect x="178.5" y="1008.7" width="2.700" height="2.700" fill="#757378"/>
<rect x="178.5" y="1013.3" width="2.700" height="2.700" fill="#757378"/>
<rect x="178.5" y="1017.9" width="2.700" height="2.700" fill="#757378"/>
<rect x="175.300" y="1022.300" width="2.400" height="4" fill="#757378"/>
<circle cx="1841.900" cy="1016.100" r="11.700" fill="#757378"/>
<path d="M1837.800 1012.300c0.300-2.400 1.900-3.800 4.300-3.800 2.500 0 4.200 1.500 4.200 3.600 0 1.500-0.700 2.400-2.100 3.300-1.100 0.700-1.400 1.200-1.400 2.200v0.600h-2.400v-0.900c0-1.500 0.500-2.400 1.900-3.300 1.100-0.700 1.500-1.200 1.500-2 0-0.900-0.700-1.500-1.700-1.500-1.100 0-1.800 0.700-2 1.900z" fill="#ffce2e"/><circle cx="1841.600" cy="1022.100" r="2" fill="#ffce2e"/>
<path d="M1883.700 1008.800a10 10 0 1 0 12.600 0" fill="none" stroke="#757378" stroke-width="3"/><rect x="1888.100" y="1004.200" width="3.900" height="13.300" rx="0.800" fill="#757378"/>
</svg>
<!--ENDGRIDICONS-->
<!--FOOTER-->
</body>
</html>
